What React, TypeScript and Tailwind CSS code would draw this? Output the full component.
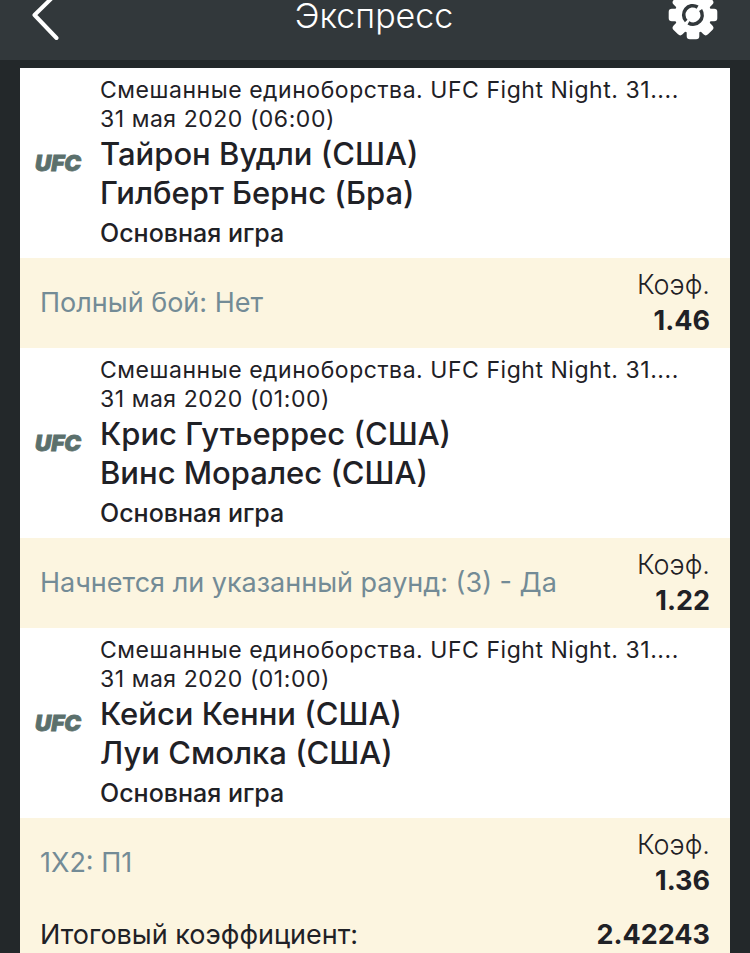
interface Bet {
  date: string;
  home: string;
  away: string;
  pick: string;
  odds: string;
}

const LEAGUE = "Смешанные единоборства. UFC Fight Night. 31....";

const bets: Bet[] = [
  {
    date: "31 мая 2020 (06:00)",
    home: "Тайрон Вудли (США)",
    away: "Гилберт Бернс (Бра)",
    pick: "Полный бой: Нет",
    odds: "1.46",
  },
  {
    date: "31 мая 2020 (01:00)",
    home: "Крис Гутьеррес (США)",
    away: "Винс Моралес (США)",
    pick: "Начнется ли указанный раунд: (3) - Да",
    odds: "1.22",
  },
  {
    date: "31 мая 2020 (01:00)",
    home: "Кейси Кенни (США)",
    away: "Луи Смолка (США)",
    pick: "1X2: П1",
    odds: "1.36",
  },
];

const TEETH = [0, 45, 90, 135, 180, 225, 270, 315];

function BackIcon() {
  return (
    <svg className="w-[30px] h-[50px]" viewBox="0 0 30 50" fill="none">
      <path
        d="M26.5 -1.5 L4.5 20 L26.5 43"
        transform="translate(0 -5)"
        stroke="#fff"
        strokeWidth="4"
        strokeLinecap="round"
        strokeLinejoin="round"
      />
    </svg>
  );
}

function GearIcon() {
  return (
    <svg className="w-[50px] h-[60px]" viewBox="-25 -15 50 60">
      <g fill="#fff">
        <circle r="18.5" />
        {TEETH.map((deg) => (
          <rect key={deg} x="-6.3" y="-24.3" width="12.6" height="14" rx="3.2" transform={`rotate(${deg})`} />
        ))}
      </g>
      <g fill="none" stroke="#32383b" strokeWidth="3.6">
        <path d="M-6.8 6.1 A9.1 9.1 0 0 1 4.6 -7.9" />
        <path d="M7.6 -5 A9.1 9.1 0 0 1 -4.6 7.9" />
      </g>
    </svg>
  );
}

function UfcLogo() {
  return (
    <svg className="w-[50px] h-[18px]" viewBox="0 0 50 18">
      <text
        x="1"
        y="16.6"
        textLength="46"
        lengthAdjust="spacingAndGlyphs"
        fill="#5b706c"
        stroke="#5b706c"
        strokeWidth="0.8"
        className="font-['Inter'] font-black italic text-[21.5px]"
      >
        UFC
      </text>
    </svg>
  );
}

function BetRow({ bet }: { bet: Bet }) {
  return (
    <div>
      <div className="flex h-[190px] bg-white">
        {/* Логотип турнира */}
        <div className="flex w-20 items-center pl-3.5">
          <UfcLogo />
        </div>
        <div className="flex-1 whitespace-nowrap pt-2">
          <div className="text-[23px] leading-[29px] tracking-[0.54px]">{LEAGUE}</div>
          <div className="text-[23px] leading-[29px] tracking-[0.54px]">{bet.date}</div>
          <div className="text-[31px] leading-[39px] font-medium">{bet.home}</div>
          <div className="text-[31px] leading-[39px] font-medium">{bet.away}</div>
          <div className="pt-0.5 text-[25px] leading-[38px] font-medium">{bet.period}</div>
        </div>
      </div>
      <div className="flex h-[90px] items-center justify-between px-5">
        <span className="text-[27px] text-[#738b96]">{bet.pick}</span>
        <div className="flex flex-col text-right">
          <span className="text-[27px] leading-9 font-light">Коэф.</span>
          <span className="text-[27px] leading-9 font-bold">{bet.odds}</span>
        </div>
      </div>
    </div>
  );
}

export default function App() {
  return (
    <div className="h-[953px] w-[750px] overflow-hidden bg-[#23282a] font-['Inter',sans-serif] text-[#1f2126]">
      <header className="flex h-[60px] items-start justify-between bg-[#32383b] pr-8 pl-[30px] text-white">
        <div className="w-[50px]">
          <BackIcon />
        </div>
        <h1 className="-mt-[5px] text-[34px] leading-[42px] font-light">Экспресс</h1>
        <GearIcon />
      </header>
      <main className="mx-5 mt-2 h-[885px] overflow-hidden bg-[#fcf5e0]">
        {bets.map((bet) => (
          <BetRow key={bet.home} bet={{ ...bet, period: "Основная игра" } as Bet} />
        ))}
        <div className="flex items-center justify-between px-5 pt-2 text-[27px] leading-[38px]">
          <span>Итоговый коэффициент:</span>
          <span className="font-bold">2.42243</span>
        </div>
      </main>
    </div>
  );
}
